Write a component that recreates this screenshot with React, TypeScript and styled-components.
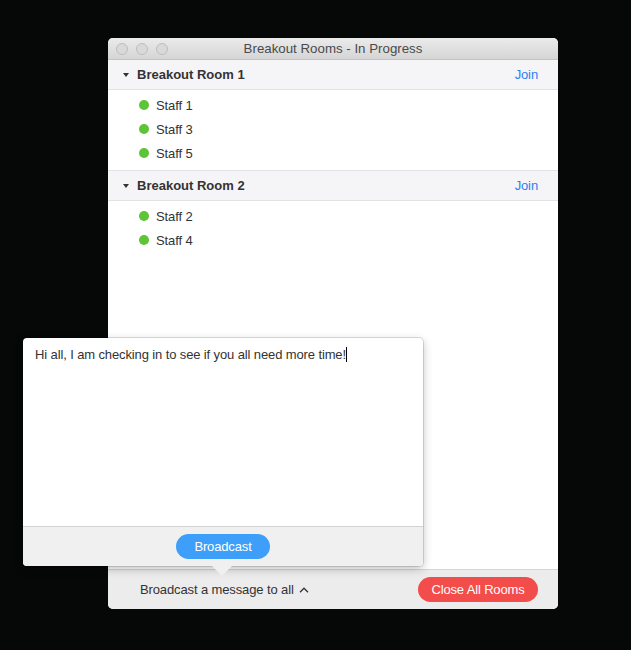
import React from "react";
import styled, { createGlobalStyle } from "styled-components";

const GlobalStyle = createGlobalStyle`
  body {
    margin: 0;
    background: #050807;
    font-family: "Liberation Sans", Arial, sans-serif;
    letter-spacing: -0.12px;
    -webkit-font-smoothing: antialiased;
  }
`;

const Desktop = styled.div`
  position: relative;
  width: 631px;
  height: 650px;
  box-sizing: border-box;
  padding: 38px 0 0 108px;
  overflow: hidden;
`;

const Window = styled.div`
  width: 450px;
  height: 571px;
  display: flex;
  flex-direction: column;
  background: #fff;
  border-radius: 5px;
  overflow: hidden;
`;

const TitleBar = styled.div`
  height: 22px;
  flex: none;
  display: flex;
  align-items: center;
  background: linear-gradient(#ebebeb, #d5d5d5);
  border-bottom: 1px solid #c3c3c3;
  box-sizing: border-box;
`;

const Lights = styled.div`
  display: flex;
  gap: 8px;
  padding-left: 8px;
`;

const Light = styled.span`
  width: 12px;
  height: 12px;
  border-radius: 50%;
  box-sizing: border-box;
  background: #d9d9d9;
  border: 1px solid #bdbdbd;
`;

const Title = styled.div`
  flex: 1;
  text-align: center;
  font-size: 13.3px;
  letter-spacing: 0;
  color: #4a4a4a;
  margin-right: 60px;
`;

const Content = styled.div`
  flex: 1;
`;

const RoomHeader = styled.div<{ $first?: boolean }>`
  height: ${(p) => (p.$first ? 30 : 31)}px;
  box-sizing: border-box;
  display: flex;
  align-items: center;
  padding: 0 20px 0 15px;
  background: #f5f5f7;
  border-top: ${(p) => (p.$first ? "none" : "1px solid #e2e2e4")};
  border-bottom: 1px solid #e2e2e4;
`;

const Caret = styled.span`
  width: 0;
  height: 0;
  border-left: 3.5px solid transparent;
  border-right: 3.5px solid transparent;
  border-top: 4px solid #333;
  margin-right: 8px;
`;

const RoomName = styled.span`
  flex: 1;
  font-size: 13px;
  font-weight: bold;
  letter-spacing: 0;
  color: #333;
`;

const Join = styled.span`
  font-size: 13px;
  color: #2d7ff0;
`;

const StaffList = styled.div`
  padding: 3px 0 5px 31px;
`;

const StaffRow = styled.div`
  height: 24px;
  display: flex;
  align-items: center;
  font-size: 13px;
  color: #333;
`;

const Dot = styled.span`
  width: 10px;
  height: 10px;
  border-radius: 50%;
  background: #5cc435;
  margin-right: 7px;
`;

const Footer = styled.div`
  height: 40px;
  flex: none;
  box-sizing: border-box;
  display: flex;
  align-items: center;
  justify-content: space-between;
  padding: 0 20px 0 32px;
  background: #ececec;
  border-top: 1px solid #d6d6d6;
`;

const BroadcastToggle = styled.span`
  display: flex;
  align-items: center;
  gap: 5px;
  font-size: 13px;
  color: #333;
`;

const PillButton = styled.button<{ $color: string; $width: number }>`
  width: ${(p) => p.$width}px;
  height: 25px;
  border: none;
  border-radius: 13px;
  background: ${(p) => p.$color};
  color: #fff;
  font-family: inherit;
  font-size: 13px;
  letter-spacing: -0.15px;
  padding: 0;
`;

const Popover = styled.div`
  position: absolute;
  left: 23px;
  top: 338px;
  width: 400px;
  height: 228px;
  display: flex;
  flex-direction: column;
  border-radius: 4px;
  background: #fff;
  box-shadow: 0 0 0 1px rgba(0, 0, 0, 0.12), 0 3px 10px rgba(0, 0, 0, 0.25);
`;

const MessageArea = styled.div`
  flex: 1;
  padding: 9px 12px;
  font-size: 13px;
  color: #333;
  border-radius: 4px 4px 0 0;
`;

const CaretBar = styled.span`
  display: inline-block;
  width: 1px;
  height: 15px;
  background: #000;
  vertical-align: -3px;
`;

const PopoverFooter = styled.div`
  height: 40px;
  flex: none;
  box-sizing: border-box;
  display: flex;
  align-items: center;
  justify-content: center;
  background: #f0f0f0;
  border-top: 1px solid #d2d2d2;
  border-radius: 0 0 4px 4px;
  position: relative;

  &::after {
    content: "";
    position: absolute;
    left: 189px;
    bottom: -10px;
    border-left: 10px solid transparent;
    border-right: 10px solid transparent;
    border-top: 10px solid #f0f0f0;
  }
`;

const rooms = [
  { name: "Breakout Room 1", staff: ["Staff 1", "Staff 3", "Staff 5"] },
  { name: "Breakout Room 2", staff: ["Staff 2", "Staff 4"] },
];

export default function App() {
  return (
    <Desktop>
      <GlobalStyle />
      <Window>
        <TitleBar>
          <Lights>
            <Light />
            <Light />
            <Light />
          </Lights>
          <Title>Breakout Rooms - In Progress</Title>
        </TitleBar>
        <Content>
          {rooms.map((room, i) => (
            <div key={room.name}>
              <RoomHeader $first={i === 0}>
                <Caret />
                <RoomName>{room.name}</RoomName>
                <Join>Join</Join>
              </RoomHeader>
              <StaffList>
                {room.staff.map((s) => (
                  <StaffRow key={s}>
                    <Dot />
                    {s}
                  </StaffRow>
                ))}
              </StaffList>
            </div>
          ))}
        </Content>
        <Footer>
          <BroadcastToggle>
            Broadcast a message to all
            <svg width="10" height="6" viewBox="0 0 10 6" fill="none">
              <path d="M1 5.2L5 1.2L9 5.2" stroke="#333" strokeWidth="1.3" />
            </svg>
          </BroadcastToggle>
          <PillButton $color="#f24c4b" $width={120}>
            Close All Rooms
          </PillButton>
        </Footer>
      </Window>
      <Popover>
        <MessageArea>
          Hi all, I am checking in to see if you all need more time!
          <CaretBar />
        </MessageArea>
        <PopoverFooter>
          <PillButton $color="#3d9ff9" $width={94}>
            Broadcast
          </PillButton>
        </PopoverFooter>
      </Popover>
    </Desktop>
  );
}
